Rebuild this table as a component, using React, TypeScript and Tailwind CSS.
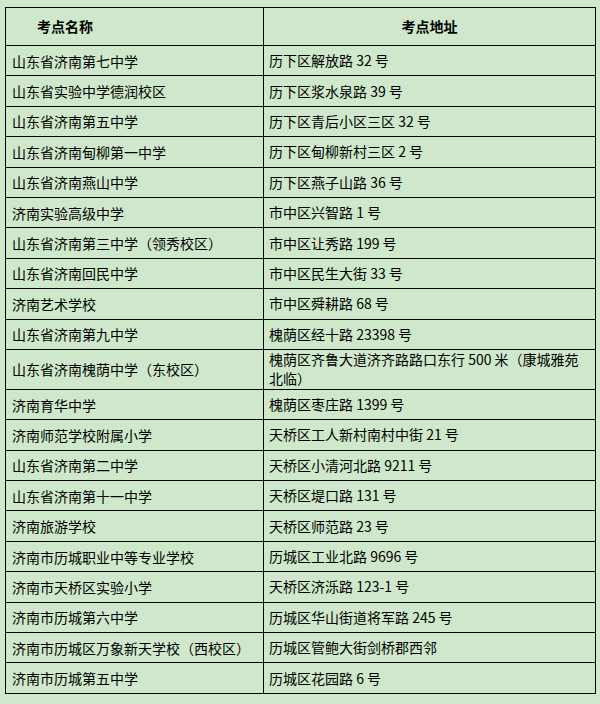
import React from 'react'

const rows: [string, React.ReactNode][] = [
  ['山东省济南第七中学', '历下区解放路 32 号'],
  ['山东省实验中学德润校区', '历下区浆水泉路 39 号'],
  ['山东省济南第五中学', '历下区青后小区三区 32 号'],
  ['山东省济南甸柳第一中学', '历下区甸柳新村三区 2 号'],
  ['山东省济南燕山中学', '历下区燕子山路 36 号'],
  ['济南实验高级中学', '市中区兴智路 1 号'],
  ['山东省济南第三中学（领秀校区）', '市中区让秀路 199 号'],
  ['山东省济南回民中学', '市中区民生大街 33 号'],
  ['济南艺术学校', '市中区舜耕路 68 号'],
  ['山东省济南第九中学', '槐荫区经十路 23398 号'],
  [
    '山东省济南槐荫中学（东校区）',
    <>
      槐荫区齐鲁大道济齐路路口东行 500 米（康城雅苑
      <br />
      北临）
    </>,
  ],
  ['济南育华中学', '槐荫区枣庄路 1399 号'],
  ['济南师范学校附属小学', '天桥区工人新村南村中街 21 号'],
  ['山东省济南第二中学', '天桥区小清河北路 9211 号'],
  ['山东省济南第十一中学', '天桥区堤口路 131 号'],
  ['济南旅游学校', '天桥区师范路 23 号'],
  ['济南市历城职业中等专业学校', '历城区工业北路 9696 号'],
  ['济南市天桥区实验小学', '天桥区济泺路 123-1 号'],
  ['济南市历城第六中学', '历城区华山街道将军路 245 号'],
  ['济南市历城区万象新天学校（西校区）', '历城区管鲍大街剑桥郡西邻'],
  ['济南市历城第五中学', '历城区花园路 6 号'],
]

export default function App() {
  return (
    <div
      className="w-[600px] h-[704px] bg-[#cfe8cb] pt-[7px] pl-[5px] text-[14px] text-black"
      style={{ fontFamily: '"Noto Sans CJK SC", "Noto Sans", sans-serif' }}
    >
      <table className="w-[590px] border-collapse border border-black table-fixed">
        <colgroup>
          <col className="w-[258px]" />
          <col className="w-[332px]" />
        </colgroup>
        <thead>
          <tr className="h-[38px]">
            <th className="border border-black text-left pl-[31px] font-bold">考点名称</th>
            <th className="border border-black text-center font-bold">考点地址</th>
          </tr>
        </thead>
        <tbody>
          {rows.map(([name, addr], i) => (
            <tr key={i} className={i === 10 ? 'h-[40px]' : 'h-[30.4px]'}>
              <td className="border border-black px-[6px] leading-[18px] align-middle">{name}</td>
              <td className="border border-black px-[5px] leading-[19px] align-middle">{addr}</td>
            </tr>
          ))}
        </tbody>
      </table>
    </div>
  )
}
